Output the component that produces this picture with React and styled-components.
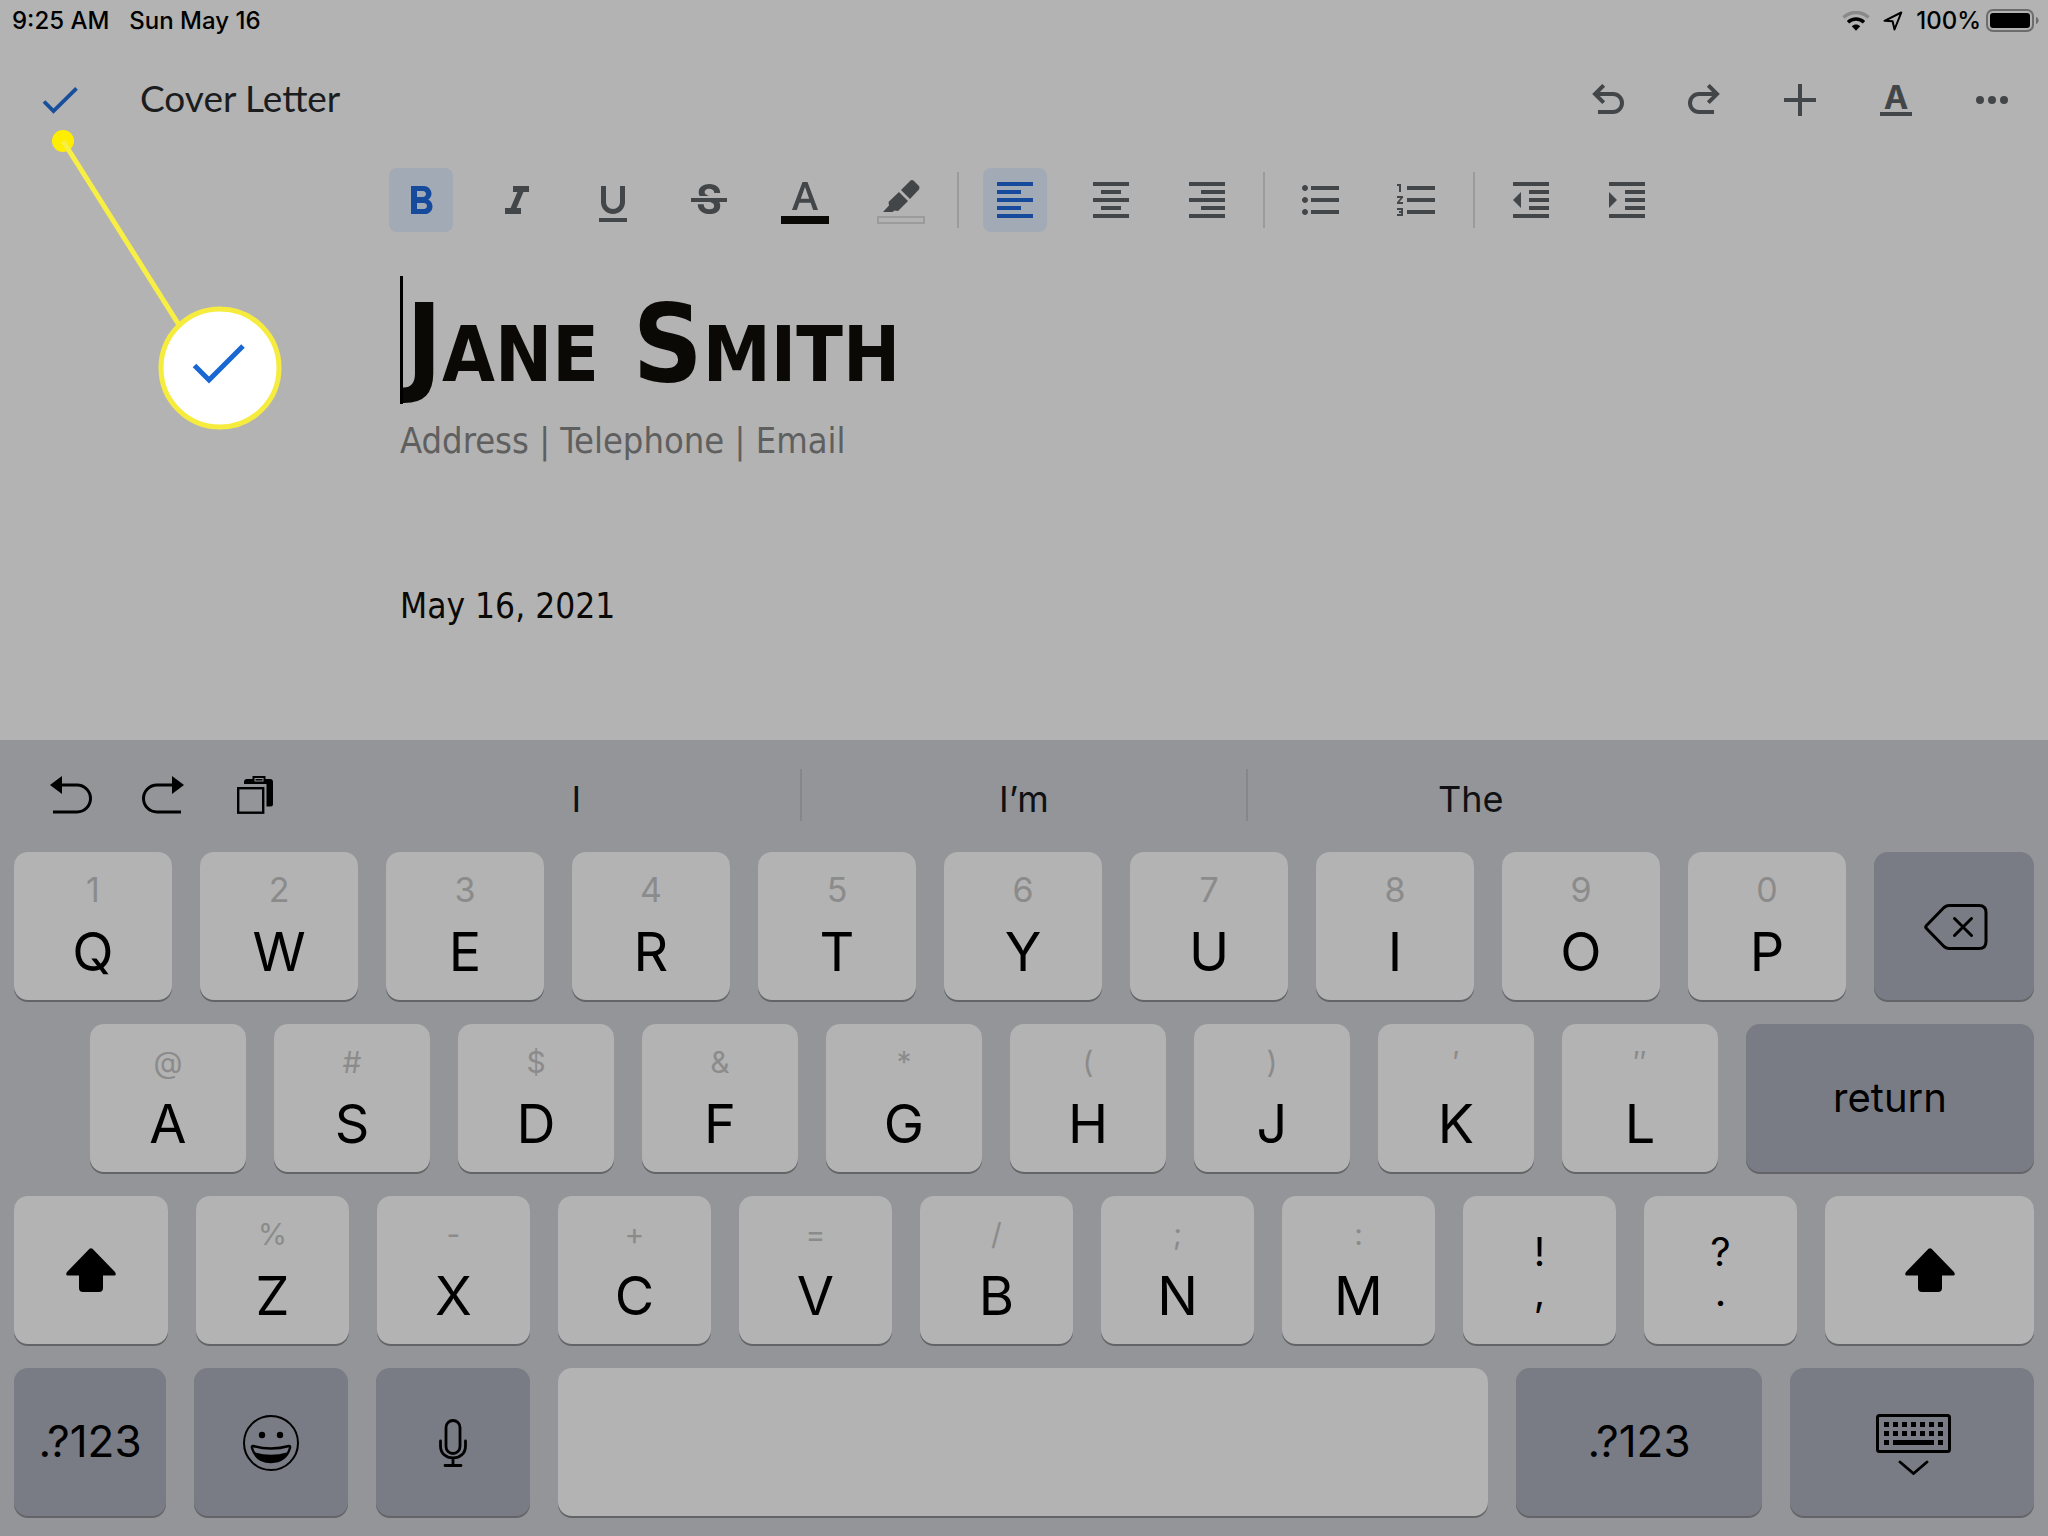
import React from 'react';

// package
import styled, { createGlobalStyle } from 'styled-components';
import {
  MdFormatBold,
  MdFormatItalic,
  MdFormatUnderlined,
  MdStrikethroughS,
  MdFormatColorText,
  MdFormatAlignLeft,
  MdFormatAlignCenter,
  MdFormatAlignRight,
  MdFormatListBulleted,
  MdFormatListNumbered,
  MdFormatIndentDecrease,
  MdFormatIndentIncrease,
} from 'react-icons/md';

const row1 = [['1', 'Q'], ['2', 'W'], ['3', 'E'], ['4', 'R'], ['5', 'T'], ['6', 'Y'], ['7', 'U'], ['8', 'I'], ['9', 'O'], ['0', 'P']];
const row2 = [['@', 'A'], ['#', 'S'], ['$', 'D'], ['&', 'F'], ['*', 'G'], ['(', 'H'], [')', 'J'], ['′', 'K'], ['″', 'L']];
const row3 = [['%', 'Z'], ['-', 'X'], ['+', 'C'], ['=', 'V'], ['/', 'B'], [';', 'N'], [':', 'M']];

function WifiIcon() {
  return (
    <svg width="28" height="20" viewBox="0 0 28 20" fill="none">
      <path d="M1.5 6.5C8.5-.2 19.500-.2 26.500 6.500" stroke="#8a8a8a" strokeWidth="3.400" />
      <path d="M6 11.200C10.500 7 17.500 7 22 11.200" stroke="#000" strokeWidth="3.400" />
      <path d="M9.800 15.200C12.200 13 15.800 13 18.200 15.200L14 19.800Z" fill="#000" />
    </svg>
  );
}

function LocationIcon() {
  return (
    <svg width="20" height="20" viewBox="0 0 20 20" fill="none" stroke="#000" strokeWidth="2" strokeLinejoin="round">
      <path d="M1.500 9.800L18.300 1.500L11.500 18.500L9.600 10.300Z" />
    </svg>
  );
}

function BatteryIcon() {
  return (
    <svg width="54" height="24" viewBox="0 0 54 24">
      <rect x="1" y="1" width="46" height="21" rx="6" fill="none" stroke="#6c6c6c" strokeWidth="2" />
      <rect x="4" y="4" width="40" height="15" rx="3" fill="#000" />
      <path d="M50 8C53.500 9.200 53.500 13.800 50 15Z" fill="#6c6c6c" />
    </svg>
  );
}

function CheckIcon() {
  return (
    <svg width="36" height="28" viewBox="0 0 36 28" fill="none" stroke="#174f9c" strokeWidth="3.800">
      <path d="M2 15.500L11.500 25L34.500 2.300" />
    </svg>
  );
}

function ArrowIcon({ flip }) {
  return (
    <svg width="32" height="32" viewBox="0 0 32 32" fill="none" stroke="currentColor" strokeWidth="4">
      <g transform={flip ? 'matrix(-1 0 0 1 32 0)' : undefined}>
        <path d="M6 28H21A9 9 0 0 0 21 10H3" />
        <path d="M11.700 1.300L3 10L11.700 18.700" />
      </g>
    </svg>
  );
}

function PlusIcon() {
  return (
    <svg width="32" height="32" viewBox="0 0 32 32" stroke="currentColor" strokeWidth="4">
      <path d="M16 0V32M0 16H32" />
    </svg>
  );
}

function MoreIcon() {
  return (
    <svg width="32" height="32" viewBox="0 0 32 32" fill="currentColor">
      <circle cx="4" cy="16" r="4" />
      <circle cx="16" cy="16" r="4" />
      <circle cx="28" cy="16" r="4" />
    </svg>
  );
}

function HighlighterIcon() {
  return (
    <svg width="48" height="48" viewBox="0 0 48 48" fill="currentColor">
      <path d="M6 36L12 29.500L11.500 26L22 16L31 25L21 35L17.500 34.500L15.500 36Z" />
      <path d="M24 14L33 5C34.300 3.700 35.700 3.700 37 5L41.500 9.500C42.800 10.800 42.800 12.700 41.500 14L33 23Z" />
    </svg>
  );
}

function KeyboardArrow({ flip }) {
  return (
    <svg width="42" height="38" viewBox="0 0 42 38" fill="none" stroke="#000" strokeWidth="3">
      <g transform={flip ? 'matrix(-1 0 0 1 42 0)' : undefined}>
        <path d="M3 36H27A13.500 13.500 0 0 0 27 9H8" />
        <path d="M0 9L12 0V18Z" fill="#000" stroke="none" />
      </g>
    </svg>
  );
}

function PasteIcon() {
  return (
    <svg width="42" height="38" viewBox="-3 0 42 38" fill="none">
      <path d="M7 8V6Q7 3 10 3H33Q36 3 36 6V28Q36 30.500 33.500 30.500H29.500V8Z" fill="#000" />
      <rect x="16.500" y="1" width="11" height="5" fill="#000" stroke="#000" strokeWidth="2" />
      <rect x="18" y="2.500" width="8" height="2.500" stroke="#939599" strokeWidth="1" />
      <rect x="1.200" y="12.200" width="25" height="24.500" fill="#939599" stroke="#000" strokeWidth="2.400" />
    </svg>
  );
}

function BackspaceIcon() {
  return (
    <svg width="68" height="50" viewBox="-4 -2 68 50" fill="none" stroke="#000" strokeWidth="3" strokeLinecap="round" strokeLinejoin="round">
      <path d="M2.500 22.500L20 4.500Q22.500 2.500 25 2.500H55Q62 2.500 62 9.500V38.500Q62 45.500 55 45.500H25Q22.500 45.500 20 43.500L2.500 25.500Q1 24 2.500 22.500Z" />
      <path d="M30.500 15.500L47.500 32.500M47.500 15.500L30.500 32.500" />
    </svg>
  );
}

function ShiftIcon() {
  return (
    <svg width="50" height="44" viewBox="0 0 50 44" fill="#000">
      <path d="M23.500 .8Q25 -.5 26.500 .8L49 24Q51 27.500 48 27.500H37V40Q37 44 33 44H17Q13 44 13 40V27.500H2Q-1 27.500 1 24Z" />
    </svg>
  );
}

function EmojiIcon() {
  return (
    <svg width="56" height="58" viewBox="0 -2 56 58" fill="none" stroke="#000" strokeWidth="2">
      <circle cx="28" cy="28" r="27" />
      <circle cx="19" cy="20" r="3.200" fill="#000" stroke="none" />
      <circle cx="37" cy="20" r="3.200" fill="#000" stroke="none" />
      <path d="M10 31Q28 36 46 31Q47.500 31 47 33C44 43 37 47 28 47C19 47 12 43 9 33Q8.500 31 10 31Z" strokeWidth="2.400" />
      <path d="M12 37.500Q28 42 44 37.500C41 44 35 47 28 47C21 47 15 44 12 37.500Z" fill="#000" stroke="none" />
    </svg>
  );
}

function MicIcon() {
  return (
    <svg width="28" height="50" viewBox="0 -2 28 50" fill="none" stroke="#000" strokeWidth="2.800" strokeLinecap="round">
      <rect x="7" y="1.500" width="14" height="33" rx="7" />
      <path d="M1.500 22V27C1.500 34.500 7 39 14 39C21 39 26.500 34.500 26.500 27V22M14 39V46.500M6 46.500H22" />
    </svg>
  );
}

function HideKeyboardIcon() {
  const cols = [8, 17, 26, 35, 44, 53, 62];
  return (
    <svg width="78" height="66" viewBox="-3 -5 78 66" fill="none" stroke="#000" strokeWidth="3">
      <rect x="1.500" y="1.500" width="72" height="36" rx="2" />
      {cols.map((x) => (
        <path key={x} d={`M${x} 10.500H${x + 5}M${x} 19.500H${x + 5}`} strokeWidth="5" />
      ))}
      <path d="M8 28.500H13M17 28.500H58M62 28.500H67" strokeWidth="5" />
      <path d="M24 48L37.500 59.500L51 48" strokeWidth="2.800" strokeLinecap="round" />
    </svg>
  );
}

function Callout() {
  return (
    <CalloutLayer width="290" height="440" viewBox="0 0 290 440" fill="none" aria-hidden="true">
      <circle cx="63" cy="141" r="11" fill="#ffee00" />
      <path d="M63 141L179 325" stroke="#f8ef45" strokeWidth="5" />
      <circle cx="220" cy="368" r="59" fill="#fff" stroke="#f6ec3e" strokeWidth="5" />
      <path d="M194.500 365.500L209 380L243 346" stroke="#1967d2" strokeWidth="5" />
    </CalloutLayer>
  );
}

function LetterKeys({ keys, size, small }) {
  return keys.map(([hint, letter]) => (
    <Key key={letter} $size={size}>
      <Hint $small={small}>{hint}</Hint>
      <Letter>{letter}</Letter>
    </Key>
  ));
}

function App() {
  return (
    <Page>
      <GlobalStyle />
      <StatusBar>
        <StatusText>9:25 AM</StatusText>
        <StatusText>Sun May 16</StatusText>
        <StatusRight>
          <WifiIcon />
          <LocationIcon />
          <Charge>
            <StatusText>100%</StatusText>
            <BatteryIcon />
          </Charge>
        </StatusRight>
      </StatusBar>

      <Header>
        <DoneButton aria-label="Done"><CheckIcon /></DoneButton>
        <FileName>Cover Letter</FileName>
        <HeaderButton aria-label="Undo"><ArrowIcon /></HeaderButton>
        <HeaderButton aria-label="Redo"><ArrowIcon flip /></HeaderButton>
        <HeaderButton aria-label="Insert"><PlusIcon /></HeaderButton>
        <HeaderButton aria-label="Format"><FormatLetter>A</FormatLetter></HeaderButton>
        <HeaderButton aria-label="More"><MoreIcon /></HeaderButton>
      </Header>

      <Toolbar role="toolbar">
        <Group>
          <Tool aria-label="Bold" $active><MdFormatBold viewBox="0 -1 24 24" /></Tool>
          <Tool aria-label="Italic"><MdFormatItalic viewBox="0 -1 24 24" /></Tool>
          <Tool aria-label="Underline"><MdFormatUnderlined viewBox="0 -2 24 24" /></Tool>
          <Tool aria-label="Strikethrough"><MdStrikethroughS viewBox="0 -1 24 24" /></Tool>
          <Tool aria-label="Text colour"><MdFormatColorText /><Swatch /></Tool>
          <Tool aria-label="Highlight colour"><HighlighterIcon /><Swatch $empty /></Tool>
        </Group>
        <Group>
          <Tool aria-label="Align left" $active><MdFormatAlignLeft /></Tool>
          <Tool aria-label="Align centre"><MdFormatAlignCenter /></Tool>
          <Tool aria-label="Align right"><MdFormatAlignRight /></Tool>
        </Group>
        <Group>
          <Tool aria-label="Bulleted list"><MdFormatListBulleted /></Tool>
          <Tool aria-label="Numbered list"><MdFormatListNumbered /></Tool>
        </Group>
        <Group>
          <Tool aria-label="Decrease indent"><MdFormatIndentDecrease /></Tool>
          <Tool aria-label="Increase indent"><MdFormatIndentIncrease /></Tool>
        </Group>
      </Toolbar>

      <Document>
        <Name><Caret />Jane Smith</Name>
        <Contact>Address | Telephone | Email</Contact>
        <DateLine>May 16, 2021</DateLine>
      </Document>

      <Keyboard>
        <Suggestions>
          <Shortcuts>
            <Shortcut aria-label="Undo"><KeyboardArrow /></Shortcut>
            <Shortcut aria-label="Redo"><KeyboardArrow flip /></Shortcut>
            <Shortcut aria-label="Paste"><PasteIcon /></Shortcut>
          </Shortcuts>
          <Suggestion>I</Suggestion>
          <Suggestion>I’m</Suggestion>
          <Suggestion>The</Suggestion>
        </Suggestions>
        <Rows>
          <Row>
            <LetterKeys keys={row1} size={158} />
            <Key $size={160} $dark $center aria-label="Delete"><BackspaceIcon /></Key>
          </Row>
          <Row $inset>
            <LetterKeys keys={row2} size={156} small />
            <Key $size={288} $dark $center>return</Key>
          </Row>
          <Row>
            <Key $size={154} $center aria-label="Shift"><ShiftIcon /></Key>
            <LetterKeys keys={row3} size={153} small />
            <Key $size={153} $center><Stack>!<br />,</Stack></Key>
            <Key $size={153} $center><Stack>?<br />.</Stack></Key>
            <Key $size={209} $center aria-label="Shift"><ShiftIcon /></Key>
          </Row>
          <Row>
            <Key $size={152} $dark $center><Symbols>.?123</Symbols></Key>
            <Key $size={154} $dark $center aria-label="Emoji"><EmojiIcon /></Key>
            <Key $size={154} $dark $center aria-label="Dictate"><MicIcon /></Key>
            <Key $size={930} aria-label="Space" />
            <Key $size={246} $dark $center><Symbols>.?123</Symbols></Key>
            <Key $size={244} $dark $center aria-label="Hide keyboard"><HideKeyboardIcon /></Key>
          </Row>
        </Rows>
      </Keyboard>
      <Callout />
    </Page>
  );
}

export default App;

const GlobalStyle = createGlobalStyle`
  * {
    box-sizing: border-box;
  }
  body {
    margin: 0;
    background-color: #b3b3b3;
    font-family: Inter, "Liberation Sans", sans-serif;
  }
  button {
    border: 0;
    padding: 0;
    background: none;
    color: inherit;
    font: inherit;
  }
  svg {
    display: block;
  }
`;
const Page = styled.div`
  position: relative;
  display: flex;
  flex-direction: column;
  min-height: 100vh;
`;
const StatusBar = styled.div`
  display: flex;
  align-items: center;
  gap: 20px;
  height: 42px;
  padding: 0 8px 0 12px;
`;
const StatusText = styled.span`
  color: #000;
  font-size: 24px;
  font-weight: 500;
  line-height: 40px;
`;
const StatusRight = styled.div`
  display: flex;
  align-items: center;
  gap: 13px;
  margin-left: auto;
`;
const Charge = styled.div`
  display: flex;
  align-items: center;
  gap: 5px;
`;
const Header = styled.header`
  display: flex;
  align-items: center;
  height: 116px;
  padding: 0 8px 0 12px;
`;
const DoneButton = styled.button`
  display: flex;
  align-items: center;
  justify-content: center;
  width: 96px;
  height: 96px;
`;
const FileName = styled.h2`
  flex: 1;
  margin: 0;
  padding: 0 0 4px 32px;
  color: #1b1c1e;
  font-family: Lato, sans-serif;
  font-size: 37px;
  font-weight: 400;
  line-height: 48px;
`;
const HeaderButton = styled.button`
  display: flex;
  align-items: center;
  justify-content: center;
  width: 96px;
  height: 96px;
  color: #434649;
`;
const FormatLetter = styled.span`
  width: 32px;
  height: 32px;
  border-bottom: 4px solid #434649;
  font-size: 33px;
  font-weight: 700;
  line-height: 26px;
  text-align: center;
`;
const Toolbar = styled.div`
  display: flex;
  justify-content: center;
  padding: 10px 0 0;
`;
const Group = styled.div`
  display: flex;
  align-items: center;
  gap: 32px;
  & + &::before {
    content: "";
    width: 2px;
    height: 56px;
    margin: 0 -8px;
    background-color: #999b9d;
  }
  & + & {
    margin-left: 32px;
  }
`;
const Tool = styled.button`
  position: relative;
  display: flex;
  align-items: center;
  justify-content: center;
  width: 64px;
  height: 64px;
  border-radius: 8px;
  background-color: ${({ $active }) => ($active ? '#a2aab5' : 'transparent')};
  color: ${({ $active }) => ($active ? '#164a9c' : '#434649')};
  font-size: 48px;
`;
const Swatch = styled.span`
  position: absolute;
  bottom: 8px;
  left: 8px;
  width: 48px;
  height: 8px;
  background-color: ${({ $empty }) => ($empty ? '#b3b3b3' : '#0b0905')};
  border: ${({ $empty }) => ($empty ? '2px solid #9b9b9b' : '0')};
`;
const Document = styled.main`
  flex: 1;
  width: 100%;
  max-width: 1248px;
  margin: 0 auto;
  padding-top: 44px;
  font-family: "DejaVu Sans Condensed", "Noto Sans", sans-serif;
`;
const Name = styled.h1`
  position: relative;
  margin: 0;
  padding: 4px 0 0 6px;
  color: #0b0905;
  font-size: 108px;
  font-variant: small-caps;
  font-weight: 700;
  line-height: 128px;
`;
const Caret = styled.span`
  position: absolute;
  top: 0;
  left: 0;
  width: 3px;
  height: 128px;
  background-color: #000;
`;
const Contact = styled.p`
  margin: 9px 0 117px;
  color: #5f5f5f;
  font-size: 36px;
  line-height: 48px;
`;
const DateLine = styled.p`
  margin: 0;
  color: #0b0905;
  font-size: 35px;
  line-height: 48px;
`;
const Keyboard = styled.section`
  background-color: #939599;
`;
const Suggestions = styled.div`
  display: grid;
  grid-template-columns: 353px 1fr 1fr 1fr 355px;
  align-items: center;
  height: 112px;
  padding-bottom: 2px;
`;
const Shortcuts = styled.div`
  display: flex;
  gap: 50px;
  padding-left: 50px;
`;
const Shortcut = styled.button`
  display: flex;
`;
const Suggestion = styled.button`
  height: 52px;
  padding-top: 8px;
  color: #101115;
  font-size: 36px;
  line-height: 44px;
  & + & {
    border-left: 2px solid #85878b;
  }
`;
const Rows = styled.div`
  display: flex;
  flex-direction: column;
  gap: 24px;
  padding: 0 14px 20px;
`;
const Row = styled.div`
  display: flex;
  gap: 28px;
  padding-left: ${({ $inset }) => ($inset ? '76px' : '0')};
`;
const Key = styled.button`
  display: flex;
  flex: ${({ $size }) => $size} 1 0;
  flex-direction: column;
  align-items: center;
  justify-content: ${({ $center }) => ($center ? 'center' : 'flex-start')};
  gap: ${({ $center }) => ($center ? '0' : '12px')};
  min-width: 0;
  height: 148px;
  padding-top: ${({ $center }) => ($center ? '0' : '18px')};
  border-radius: 14px;
  background-color: ${({ $dark }) => ($dark ? '#797c84' : '#b3b3b3')};
  box-shadow: 0 2px 0 #626467;
  color: #000;
  font-size: 40px;
  line-height: 40px;
`;
const Hint = styled.span`
  color: #8b8b8b;
  font-size: ${({ $small }) => ($small ? '30px' : '34px')};
  line-height: 40px;
`;
const Letter = styled.span`
  font-size: 54px;
  line-height: 60px;
`;
const Stack = styled.span`
  padding-top: 4px;
  text-align: center;
`;
const Symbols = styled.span`
  padding-bottom: 2px;
  font-size: 44px;
  line-height: 44px;
`;
const CalloutLayer = styled.svg`
  position: absolute;
  top: 0;
  left: 0;
  pointer-events: none;
`;
